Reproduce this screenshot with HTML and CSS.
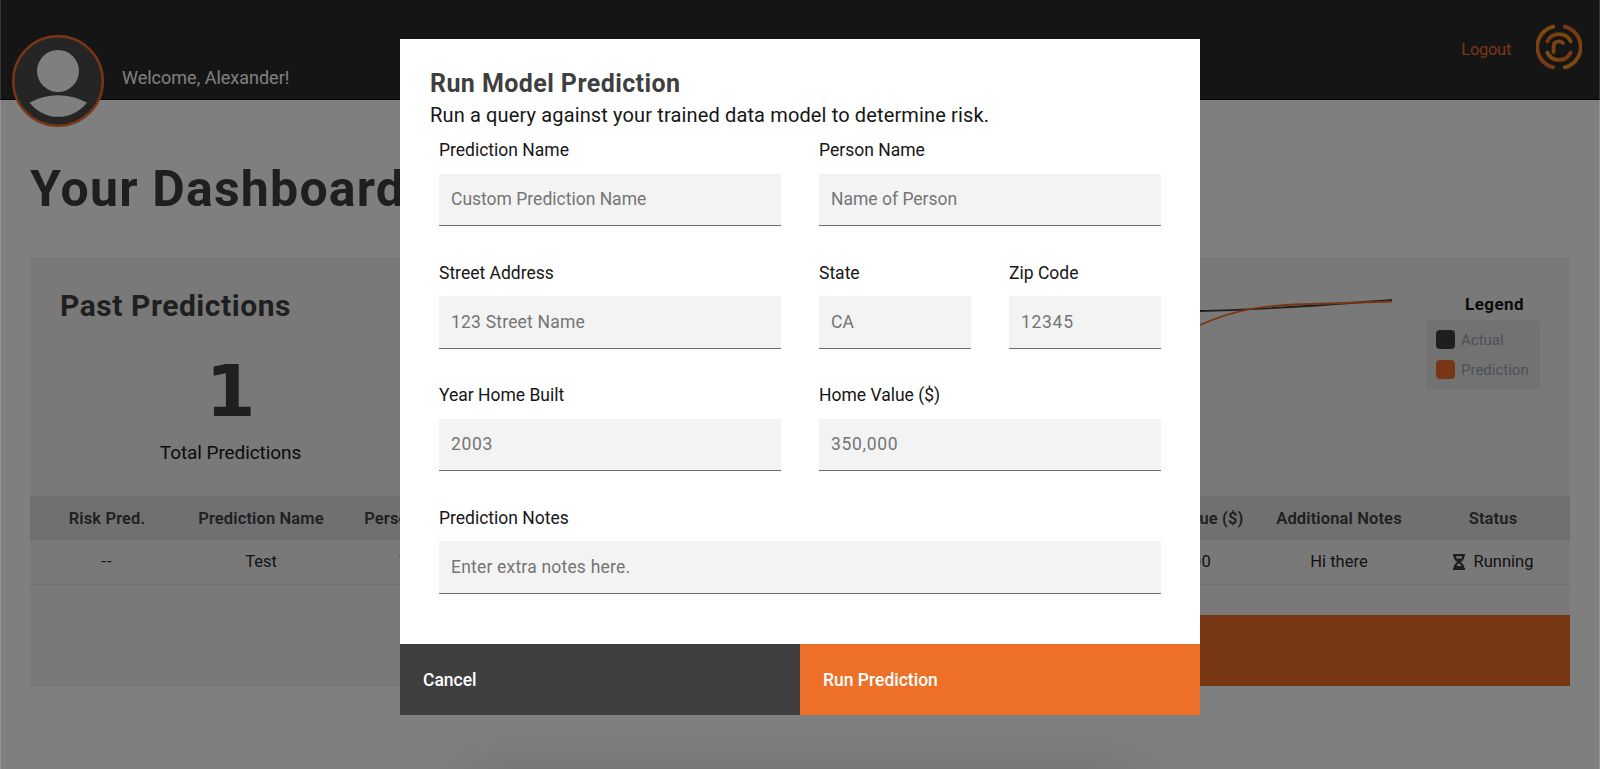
FILE: index.html
```html
<!DOCTYPE html>
<html lang="en">
<head>
<meta charset="utf-8">
<title>Your Dashboard</title>
<link rel="stylesheet" href="styles.css">
</head>
<body>
<div class="page">
  <header class="topbar">
    <div class="user">
      <svg class="avatar" viewBox="0 0 92 92"><circle cx="46" cy="46" r="44.8" fill="#4a4a4a" stroke="#f06e28" stroke-width="2.4"/><circle cx="46" cy="36" r="21" fill="#fff"/><path d="M17.5 67.5Q46 53 75 67.5A36 36 0 0 1 17.5 67.5Z" fill="#fff"/></svg>
      <span class="welcome">Welcome, Alexander!</span>
    </div>
    <nav class="account">
      <span class="logout">Logout</span>
      <svg class="logo" viewBox="0 0 46 46" fill="none" stroke-linecap="round" stroke-width="3.8">
        <defs>
          <linearGradient id="a" x1="0" y1="0" x2="0" y2="1"><stop offset="0" stop-color="#f8981d"/><stop offset="1" stop-color="#f06e28"/></linearGradient>
          <linearGradient id="b" x1="0" y1="0" x2="0" y2="1"><stop offset="0" stop-color="#f06e28"/><stop offset="1" stop-color="#f8981d"/></linearGradient>
          <linearGradient id="c" x1="0" y1="0" x2="1" y2="0"><stop offset="0" stop-color="#f06e28"/><stop offset="1" stop-color="#f8981d"/></linearGradient>
          <linearGradient id="d" x1="0" y1="0" x2="1" y2="0"><stop offset="0" stop-color="#f8981d"/><stop offset="1" stop-color="#f06e28"/></linearGradient>
        </defs>
        <path d="M17.3 2.6A21 21 0 0 0 17.3 43.4" stroke="url(#a)"/>
        <path d="M28.7 2.6A21 21 0 0 1 28.7 43.4" stroke="url(#b)"/>
        <path d="M11.3 17.4A13 13 0 0 1 34.7 17.4" stroke="url(#c)"/>
        <path d="M11.3 28.6A13 13 0 0 0 34.7 28.6" stroke="url(#d)"/>
        <path d="M17.6 28V22.3Q17.8 17.3 23 17.3Q25.5 17.3 27 19" stroke="#f48325"/>
      </svg>
    </nav>
  </header>
  <h1 class="title">Your Dashboard</h1>
  <section class="panel">
    <div class="overview">
      <div class="past">
        <h2 class="past-title">Past Predictions</h2>
        <div class="total">
          <strong class="count">1</strong>
          <span class="total-label">Total Predictions</span>
        </div>
      </div>
      <svg class="chart" viewBox="0 0 240 60" fill="none" stroke-width="1.8"><path d="M0 22L48 21C110 20 170 15 240 10" stroke="#3f3f3f"/><path d="M0 55L48 35C80 21 105 15 160 14L240 11.500" stroke="#f06e28"/></svg>
      <div class="legend">
        <h3 class="legend-title">Legend</h3>
        <ul class="legend-box">
          <li><i class="swatch dark"></i>Actual</li>
          <li><i class="swatch orange"></i>Prediction</li>
        </ul>
      </div>
    </div>
    <div class="row head">
      <span>Risk Pred.</span><span>Prediction Name</span><span>Person Name</span><span></span><span></span><span></span><span></span><span>Home Value ($)</span><span>Additional Notes</span><span>Status</span>
    </div>
    <div class="row data">
      <span class="dashes">--</span><span>Test</span><span>Test</span><span></span><span></span><span></span><span></span><span class="value">50,000</span><span>Hi there</span>
      <span class="status"><svg class="hourglass" viewBox="0 0 12 16"><path d="M0 0H12V2.200H11.300C11.200 5 9.800 6.500 7.800 8C9.800 9.500 11.200 11 11.300 13.800H12V16H0V13.800H.7C.8 11 2.200 9.500 4.200 8C2.200 6.500 .8 5 .7 2.200H0Z" fill="#3a3a3a"/><path d="M3 2.200H9Q9 3.400 8.400 4.400H3.600Q3 3.400 3 2.200ZM3.600 12Q4.200 10.500 6 9.300Q7.800 10.500 8.400 12Z" fill="#f2f2f2"/></svg>Running</span>
    </div>
    <div class="run-strip"></div>
  </section>
</div>
<div class="overlay">
  <form class="modal">
    <div class="body">
      <h2 class="m-title">Run Model Prediction</h2>
      <p class="m-sub">Run a query against your trained data model to determine risk.</p>
      <div class="fields">
        <label class="half"><span class="t">Prediction Name</span><input placeholder="Custom Prediction Name"></label>
        <label class="half"><span class="t">Person Name</span><input placeholder="Name of Person"></label>
        <label class="half"><span class="t">Street Address</span><input class="wide" placeholder="123 Street Name"></label>
        <label class="quarter"><span class="t">State</span><input placeholder="CA"></label>
        <label class="quarter"><span class="t">Zip Code</span><input class="digits" placeholder="12345"></label>
        <label class="half"><span class="t">Year Home Built</span><input class="digits" placeholder="2003"></label>
        <label class="half"><span class="t">Home Value ($)</span><input class="digits" placeholder="350,000"></label>
        <label class="full"><span class="t">Prediction Notes</span><input class="wide" placeholder="Enter extra notes here."></label>
      </div>
    </div>
    <div class="actions">
      <button type="button" class="cancel">Cancel</button><button type="button" class="run">Run Prediction</button>
    </div>
  </form>
</div>
</body>
</html>
```
FILE: styles.css
```css
* { box-sizing: border-box; }
body { margin: 0; height: 769px; overflow: hidden; background: #fff; color: #161616; font-family: Roboto, "Noto Sans", sans-serif; font-size: 17px; }
h1, h2, h3, p, ul { margin: 0; padding: 0; }
.page { height: 769px; }
.topbar { height: 100px; background: #2a2a2a; border-bottom: 1px solid #000; display: flex; justify-content: space-between; }
.user { display: flex; padding: 35px 0 0 12px; }
.avatar { width: 92px; height: 92px; flex: none; }
.welcome { margin: 30px 0 0 18px; line-height: 26px; color: #fff; font-size: 18px; }
.account { display: flex; gap: 25px; padding: 24px 18px 0 0; }
.logout { line-height: 26px; margin-top: 13px; color: #f06e28; font-size: 16.5px; letter-spacing: -.3px; }
.logo { width: 46px; height: 46px; }
.title { margin: 56px 0 0 30px; height: 102px; line-height: 66px; font-size: 50px; font-weight: 700; color: #3f3f3f; letter-spacing: 1.2px; }
.panel { margin: 0 30px; height: 428px; background: #f2f2f2; }
.overview { height: 238px; display: flex; }
.past { width: 400px; padding: 30px 0 0 30px; }
.past-title { font-size: 30px; line-height: 36px; color: #3f3f3f; letter-spacing: .55px; }
.total { width: 341px; display: flex; flex-direction: column; align-items: center; margin-top: 41px; }
.count { height: 53px; line-height: 53px; font-family: "DejaVu Sans", sans-serif; font-size: 72px; font-weight: 700; color: #3f3f3f; }
.total-label { font-size: 19px; line-height: 26px; margin-top: 22px; letter-spacing: -.08px; }
.chart { width: 240px; height: 60px; margin: 32px 0 0 722px; flex: none; }
.legend { margin: 35px 0 0 34px; width: 114px; }
.legend-title { font-size: 17px; line-height: 22px; text-align: center; padding-left: 23px; letter-spacing: .4px; }
.legend-box { margin-top: 5px; height: 70px; border-radius: 4px; background: #e5e5e5; padding: 10px 10px; list-style: none; font-size: 15px; color: #9ba1b0; }
.legend-box li { display: flex; align-items: center; gap: 6px; height: 19px; margin-bottom: 11px; }
.swatch { width: 19px; height: 19px; border-radius: 4px; }
.dark { background: #3f3f3f; }
.orange { background: #f06e28; }
.row { display: grid; grid-template-columns: repeat(10, 1fr); text-align: center; height: 44px; line-height: 45px; white-space: nowrap; }
.head { background: #e0e0e0; font-weight: 600; color: #3f3f3f; font-size: 16.5px; letter-spacing: .13px; }
.data { height: 45px; line-height: 44px; border-bottom: 1px solid #e0e0e0; font-size: 16.5px; color: #262626; }
.dashes { letter-spacing: 1.2px; }
.value { letter-spacing: .5px; }
.status { display: flex; justify-content: center; align-items: center; gap: 9px; }
.hourglass { width: 12px; height: 16px; }
.run-strip { margin: 30px 0 0 770px; height: 71px; background: #f06e28; }
.overlay { position: absolute; inset: 0; height: 769px; background: rgba(0,0,0,.5); display: flex; justify-content: center; align-items: flex-start; padding-top: 39px; border: solid rgba(255,255,255,.15); border-width: 0 1px; overflow: hidden; }
.overlay::after { content: ""; position: absolute; left: 480px; top: 790px; width: 640px; height: 60px; box-shadow: 0 0 60px 12px rgba(0,0,0,.17); }
.modal { width: 800px; height: 676px; background: #fff; }
.body { height: 605px; padding: 28px 30px 0; }
.m-title { font-size: 25px; line-height: 34px; color: #3f3f3f; letter-spacing: .42px; }
.m-sub { font-size: 20px; line-height: 28px; letter-spacing: .14px; }
.fields { display: grid; grid-template-columns: repeat(4, 152px); gap: 32.5px 38px; padding: 7px 9px 0; }
.half { grid-column: span 2; }
.full { grid-column: span 4; }
label { display: block; font-size: 17.5px; line-height: 28px; height: 90.1px; }
label .t { display: block; height: 37.5px; }
input { display: block; width: 100%; height: 52.6px; padding: 0 12px; border: 0; border-bottom: 1px solid #6f6f6f; border-radius: 0; background: #f3f3f3; font: 17.5px Roboto, sans-serif; }
.wide { letter-spacing: .2px; }
.digits { letter-spacing: .7px; }
input::placeholder { color: #757575; opacity: 1; }
.actions { display: flex; height: 71px; }
.actions button { flex: 1; border: 0; padding: 0 22px 0 23px; text-align: left; color: #fff; font: 500 17.5px Roboto, sans-serif; }
.actions .cancel { background: #3f3f3f; }
.actions .run { background: #ee6f27; }
```
